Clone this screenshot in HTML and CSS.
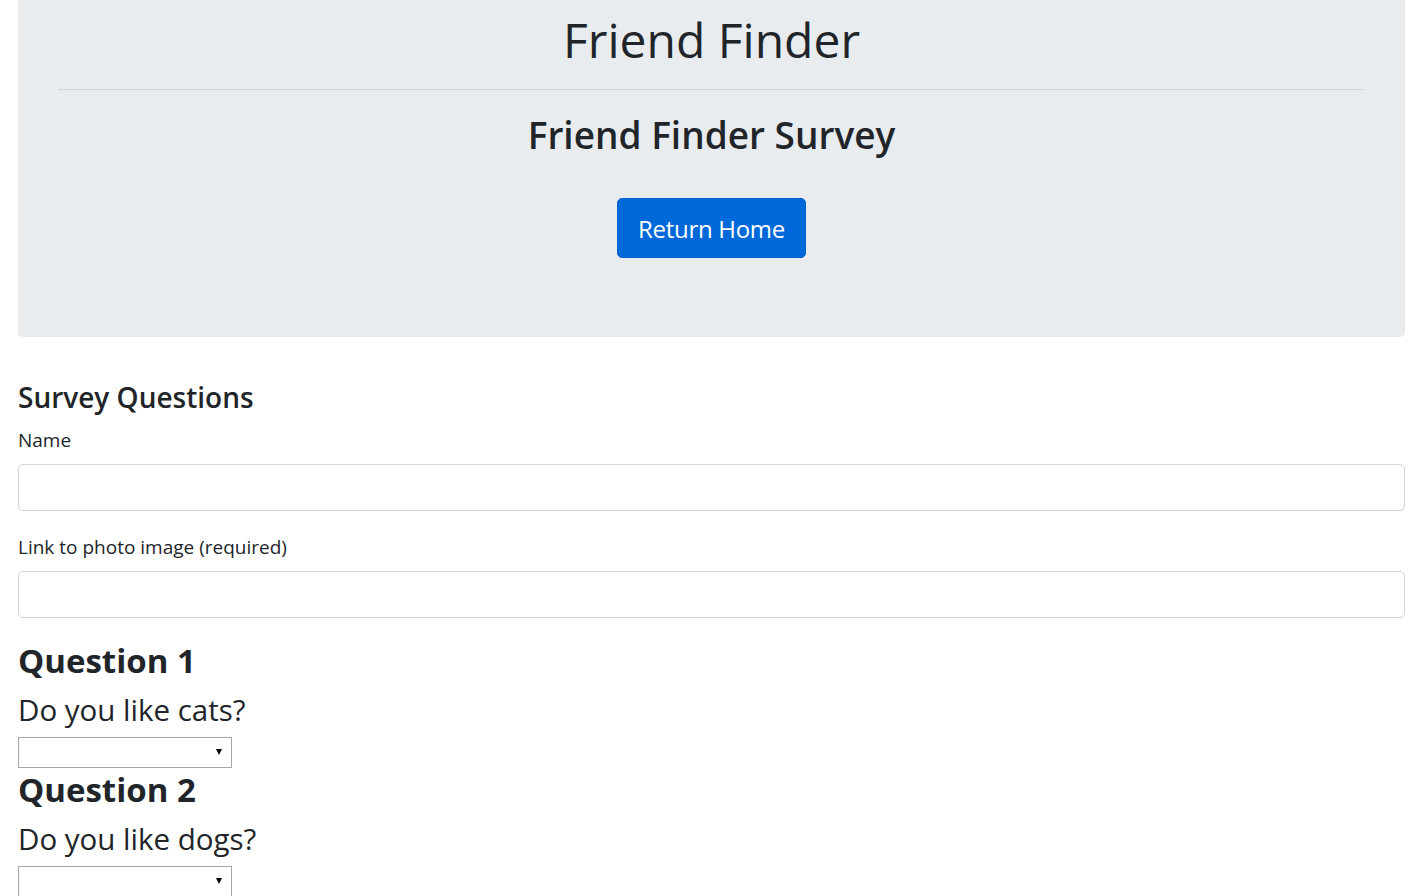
FILE: index.html
```html
<!DOCTYPE html>
<html lang="en">
<head>
<meta charset="utf-8">
<title>Friend Finder Survey</title>
<link rel="stylesheet" href="styles.css">
</head>
<body>
<div class="container">
  <header class="jumbotron">
    <h1 class="display">Friend Finder</h1>
    <hr class="divider">
    <h2 class="subtitle">Friend Finder Survey</h2>
    <a class="btn" href="#">Return Home</a>
  </header>

  <h3 class="section-title">Survey Questions</h3>
  <form class="survey">
    <div class="form-group">
      <label class="label" for="name">Name</label>
      <input class="form-control" id="name" type="text">
    </div>
    <div class="form-group">
      <label class="label" for="photo">Link to photo image (required)</label>
      <input class="form-control" id="photo" type="text">
    </div>

    <div class="questions">
      <div class="question">
        <h2 class="q-title">Question 1</h2>
        <h4 class="q-text">Do you like cats?</h4>
        <div class="select-wrap">
          <select class="select">
            <option></option>
            <option>1 (Strongly Disagree)</option>
            <option>2</option>
            <option>3</option>
            <option>4</option>
            <option>5 (Strongly Agree)</option>
          </select>
        </div>
      </div>
      <div class="question">
        <h2 class="q-title">Question 2</h2>
        <h4 class="q-text">Do you like dogs?</h4>
        <div class="select-wrap">
          <select class="select">
            <option></option>
            <option>1 (Strongly Disagree)</option>
            <option>2</option>
            <option>3</option>
            <option>4</option>
            <option>5 (Strongly Agree)</option>
          </select>
        </div>
      </div>
    </div>
  </form>
</div>
</body>
</html>
```

FILE: styles.css
```css
html, body {
  margin: 0;
  padding: 0;
  background: #fff;
}

body {
  font-family: "Open Sans", "Noto Sans", "Liberation Sans", sans-serif;
  color: #212529;
}

.container {
  padding: 0 16px 0 18px;
}

.jumbotron {
  background: #e9ecef;
  border-radius: 0 0 5px 5px;
  padding: 11px 40px 79px;
  display: flex;
  flex-direction: column;
  align-items: center;
}

.display {
  margin: 0;
  font-size: 48px;
  line-height: 58px;
  font-weight: 500;
  text-align: center;
}

.divider {
  align-self: stretch;
  margin: 20px 0 0;
  border: 0;
  border-top: 1px solid #d2d4d7;
  height: 0;
}

.subtitle {
  margin: 22px 0 0;
  font-size: 37px;
  line-height: 46px;
  font-weight: 600;
  text-align: center;
}

.btn {
  margin-top: 40px;
  display: inline-block;
  background: #0069d9;
  color: #fff;
  text-decoration: none;
  font-size: 24px;
  letter-spacing: -0.3px;
  line-height: 56px;
  padding: 2px 20px 0;
  border: 1px solid #0062cc;
  border-radius: 5px;
}

.section-title {
  margin: 43px 0 0;
  font-size: 28px;
  line-height: 34px;
  font-weight: 600;
}

.form-group {
  display: flex;
  flex-direction: column;
}

.survey .form-group:first-child {
  margin-top: 14px;
}

.form-group + .form-group {
  margin-top: 24px;
}

.label {
  font-size: 19px;
  line-height: 24px;
  margin-bottom: 12px;
}

.form-control {
  box-sizing: border-box;
  height: 47px;
  width: 100%;
  margin: 0;
  padding: 6px 12px;
  font: inherit;
  font-size: 18px;
  border: 1px solid #ced4da;
  border-radius: 5px;
  background: #fff;
}

.questions {
  margin-top: 23px;
  display: flex;
  flex-direction: column;
  gap: 2px;
}

.q-title {
  margin: 0;
  font-size: 33px;
  line-height: 40px;
  font-weight: 700;
}

.q-text {
  margin: 12px 0 10px;
  font-size: 29.5px;
  line-height: 34px;
  font-weight: 400;
}

.select-wrap {
  position: relative;
  width: 214px;
  height: 31px;
}

.select {
  -webkit-appearance: none;
  appearance: none;
  box-sizing: border-box;
  width: 214px;
  height: 31px;
  margin: 0;
  border: 1px solid #a6a6a6;
  border-radius: 0;
  background: #fff;
  font-family: inherit;
  font-size: 14px;
}

.select-wrap::after {
  content: "";
  position: absolute;
  right: 10px;
  top: 12px;
  width: 0;
  height: 0;
  border-left: 3px solid transparent;
  border-right: 3px solid transparent;
  border-top: 6px solid #000;
  pointer-events: none;
}
```
